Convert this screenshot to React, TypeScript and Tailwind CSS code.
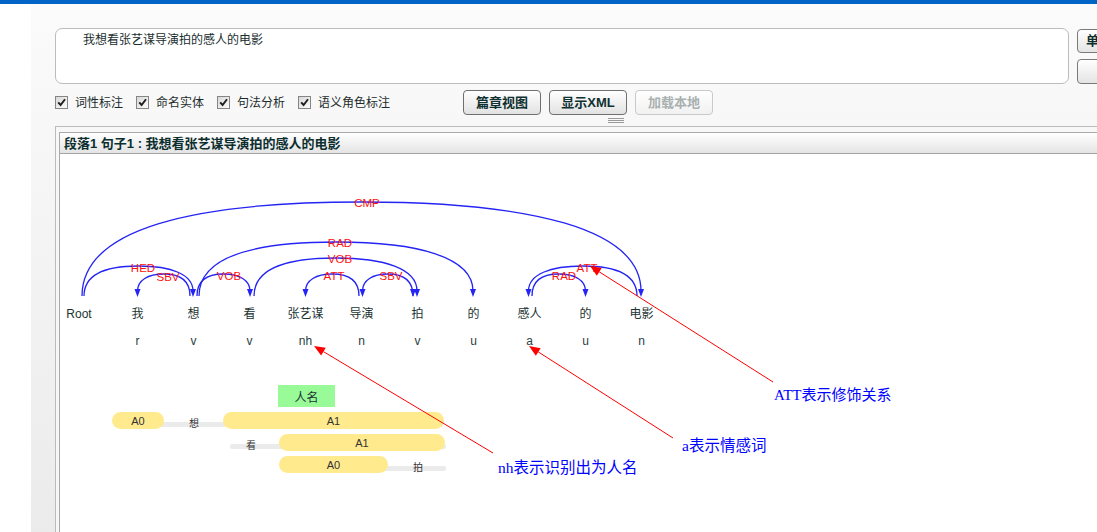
import React from "react";

const Y0 = 296;

type Arc = { a: number; b: number; top: number };

const arcs: Arc[] = [
  { a: 82, b: 641, top: 202 },
  { a: 84, b: 193, top: 266 },
  { a: 190, b: 137.5, top: 274 },
  { a: 197, b: 250, top: 274 },
  { a: 199, b: 473, top: 242 },
  { a: 254, b: 417, top: 258 },
  { a: 359, b: 305.5, top: 274 },
  { a: 413, b: 362.5, top: 274 },
  { a: 637, b: 528.5, top: 266 },
  { a: 532, b: 585.5, top: 274 },
];

const labels: [string, number, number][] = [
  ["CMP", 367, 203],
  ["HED", 143, 268],
  ["SBV", 168, 277],
  ["VOB", 229, 276],
  ["RAD", 340, 243],
  ["VOB", 340, 259],
  ["ATT", 334, 276],
  ["SBV", 391, 276],
  ["ATT", 587, 268],
  ["RAD", 564, 276],
];

const words: [string, string, number][] = [
  ["Root", "", 79],
  ["我", "r", 137.5],
  ["想", "v", 193.5],
  ["看", "v", 249.5],
  ["张艺谋", "nh", 305.5],
  ["导演", "n", 361.5],
  ["拍", "v", 417.5],
  ["的", "u", 473.5],
  ["感人", "a", 529.5],
  ["的", "u", 585.5],
  ["电影", "n", 641.5],
];

function arcPath({ a, b, top }: Arc) {
  const h = Y0 - top;
  const w = Math.abs(b - a);
  const s = b > a ? 1 : -1;
  const dx = w * 0.2 * s;
  const xm = (a + b) / 2;
  const cy = Y0 - h * 0.72;
  return `M${a},${Y0} C${a},${cy} ${a + dx},${top} ${xm},${top} S${b},${cy} ${b},${Y0 - 5}`;
}

function arrowHead(x: number) {
  return `${x - 3},${Y0 - 7} ${x + 3},${Y0 - 7} ${x},${Y0 + 1}`;
}

function redArrow(tx: number, ty: number, fx: number, fy: number) {
  const dx = tx - fx;
  const dy = ty - fy;
  const len = Math.sqrt(dx * dx + dy * dy);
  const ux = dx / len;
  const uy = dy / len;
  const L = 11;
  const W = 4.5;
  const bx = tx - ux * L;
  const by = ty - uy * L;
  const p1 = `${tx},${ty}`;
  const p2 = `${bx - uy * W},${by + ux * W}`;
  const p3 = `${bx + uy * W},${by - ux * W}`;
  return { line: { x1: fx, y1: fy, x2: bx, y2: by }, poly: `${p1} ${p2} ${p3}` };
}

const reds = [
  redArrow(590, 266, 773, 382),
  redArrow(529, 346, 673, 438),
  redArrow(314, 346, 493, 453),
];

function Check() {
  return (
    <span className="w-[13px] h-[13px] shrink-0 border border-[#858585] bg-gradient-to-br from-[#d8d8d8] to-[#fdfdfd] flex items-center justify-center">
      <svg width="9" height="9" viewBox="0 0 9 9">
        <path d="M1.2 4.3 L3.6 7 L8 1.2" stroke="#1e1e1e" strokeWidth="1.9" fill="none" />
      </svg>
    </span>
  );
}

function Btn({ children, disabled }: { children: React.ReactNode; disabled?: boolean }) {
  return (
    <div
      className={
        disabled
          ? "w-[78px] h-[25px] rounded-[4px] border border-[#c9c9c9] bg-gradient-to-b from-white to-[#f1f1f1] text-[13px] font-bold text-[#a8b0b0] flex items-center justify-center"
          : "w-[78px] h-[25px] rounded-[4px] border border-[#6f6f6f] bg-gradient-to-b from-white to-[#e2e2e2] text-[13px] font-bold text-[#0f3030] flex items-center justify-center"
      }
    >
      {children}
    </div>
  );
}

export default function App() {
  return (
    <div className="w-[1097px] h-[532px] overflow-hidden bg-white flex flex-col font-['Liberation_Sans','Noto_Sans_CJK_SC',sans-serif] text-[#1a3333]">
      <div className="h-[4px] shrink-0 bg-[#0063c6]" />
      <div className="flex flex-1 min-h-0">
        <div className="w-[31px] shrink-0 bg-white" />
        <div className="flex-1 min-w-0 overflow-hidden bg-gradient-to-b from-[#fbfbfb] to-[#ebebeb] pl-[24px] pt-[24px] flex flex-col">
          <div className="flex items-start gap-[8px] shrink-0">
            <div className="w-[1014px] h-[56px] shrink-0 border border-[#bcbcbc] rounded-[7px] bg-white pl-[27px] pt-[3px] text-[12px] leading-[16px] text-[#1a2e2e]">
              我想看张艺谋导演拍的感人的电影
            </div>
            <div className="flex flex-col gap-[6px] mt-[1px] shrink-0">
              <div className="w-[78px] h-[24px] rounded-[4px] border border-[#7a7a7a] bg-gradient-to-b from-white to-[#e4e4e4] text-[13px] font-bold text-[#0f3030] pl-[8px] flex items-center whitespace-nowrap overflow-hidden">
                单句分析
              </div>
              <div className="w-[78px] h-[25px] rounded-[4px] border border-[#7a7a7a] bg-gradient-to-b from-white to-[#e4e4e4]" />
            </div>
          </div>
          <div className="mt-[6px] h-[25px] flex items-center shrink-0 text-[12px] text-[#1c2c2c]">
            <div className="flex items-center gap-[7px]">
              <Check />
              <span>词性标注</span>
            </div>
            <div className="flex items-center gap-[7px] ml-[13px]">
              <Check />
              <span>命名实体</span>
            </div>
            <div className="flex items-center gap-[7px] ml-[13px]">
              <Check />
              <span>句法分析</span>
            </div>
            <div className="flex items-center gap-[7px] ml-[13px]">
              <Check />
              <span>语义角色标注</span>
            </div>
            <div className="flex gap-[8px] ml-[73px]">
              <Btn>篇章视图</Btn>
              <Btn>显示XML</Btn>
              <Btn disabled>加载本地</Btn>
            </div>
          </div>
          <div className="h-[11px] shrink-0 pt-[3px] pl-[553px]">
            <div className="w-[16px] flex flex-col gap-[1px]">
              <div className="h-px bg-[#9a9a9a]" />
              <div className="h-px bg-[#9a9a9a]" />
              <div className="h-px bg-[#9a9a9a]" />
            </div>
          </div>
          <div className="h-[430px] shrink-0 w-[1100px] border-t border-l border-[#bbbbbb] bg-[#f7f7f7] pt-[5px] pl-[3px] flex flex-col">
            <div className="flex-1 min-h-0 border border-[#aaaaaa] bg-white flex flex-col">
              <div className="h-[21px] shrink-0 border-b border-[#a3a3a3] bg-gradient-to-b from-white to-[#e4e4e4] pl-[4px] flex items-center text-[13px] font-bold text-[#0c2e2e] leading-none">
                段落1 句子1 : 我想看张艺谋导演拍的感人的电影
              </div>
              <div className="flex-1 min-h-0 relative overflow-hidden">
                <svg
                  className="absolute left-0 top-0"
                  width="1040"
                  height="380"
                  viewBox="60 154 1040 380"
                >
                  {arcs.map((arc, i) => (
                    <g key={i}>
                      <path d={arcPath(arc)} stroke="#2424f4" strokeWidth="1.3" fill="none" />
                      <polygon points={arrowHead(arc.b)} fill="#2424f4" />
                    </g>
                  ))}
                  <polygon points={arrowHead(413)} fill="#2424f4" />
                  {labels.map(([t, x, y], i) => (
                    <text
                      key={i}
                      x={x}
                      y={y}
                      textAnchor="middle"
                      dominantBaseline="central"
                      fontSize="11.5"
                      fill="#ff1010"
                      fontFamily="Liberation Sans, sans-serif"
                    >
                      {t}
                    </text>
                  ))}
                  {words.map(([w, p, x], i) => (
                    <g key={i}>
                      <text
                        x={x}
                        y={314}
                        textAnchor="middle"
                        dominantBaseline="central"
                        fontSize="12"
                        fill="#1c3333"
                        fontFamily="Liberation Sans, Noto Sans CJK SC, sans-serif"
                      >
                        {w}
                      </text>
                      {p && (
                        <text
                          x={x}
                          y={341}
                          textAnchor="middle"
                          dominantBaseline="central"
                          fontSize="12"
                          fill="#2a4040"
                          fontFamily="Liberation Sans, sans-serif"
                        >
                          {p}
                        </text>
                      )}
                    </g>
                  ))}

                  {/* semantic roles */}
                  <rect x="278" y="385" width="57" height="22" fill="#98fb98" />
                  <text x="306.5" y="396" textAnchor="middle" dominantBaseline="central" fontSize="12" fill="#1c3333" fontFamily="Noto Sans CJK SC, sans-serif">
                    人名
                  </text>

                  <rect x="160" y="422" width="68" height="5" fill="#ebebeb" />
                  <rect x="112" y="412" width="52" height="17" rx="8.5" fill="#ffea8e" />
                  <text x="138" y="420.5" textAnchor="middle" dominantBaseline="central" fontSize="11" fill="#333" fontFamily="Liberation Sans, sans-serif">A0</text>
                  <text x="194" y="422" textAnchor="middle" dominantBaseline="central" fontSize="10" fill="#333" fontFamily="Noto Sans CJK SC, sans-serif">想</text>
                  <rect x="223" y="412" width="221" height="17" rx="8.5" fill="#ffea8e" />
                  <text x="333.5" y="420.5" textAnchor="middle" dominantBaseline="central" fontSize="11" fill="#333" fontFamily="Liberation Sans, sans-serif">A1</text>

                  <rect x="230" y="444" width="216" height="5" rx="2" fill="#ebebeb" />
                  <text x="251" y="444" textAnchor="middle" dominantBaseline="central" fontSize="10" fill="#333" fontFamily="Noto Sans CJK SC, sans-serif">看</text>
                  <rect x="279" y="434" width="166" height="17" rx="8.5" fill="#ffea8e" />
                  <text x="362" y="442.5" textAnchor="middle" dominantBaseline="central" fontSize="11" fill="#333" fontFamily="Liberation Sans, sans-serif">A1</text>

                  <rect x="380" y="466" width="66" height="5" rx="2" fill="#ebebeb" />
                  <rect x="279" y="456" width="109" height="17" rx="8.5" fill="#ffea8e" />
                  <text x="333.5" y="464.5" textAnchor="middle" dominantBaseline="central" fontSize="11" fill="#333" fontFamily="Liberation Sans, sans-serif">A0</text>
                  <text x="418" y="466" textAnchor="middle" dominantBaseline="central" fontSize="10" fill="#333" fontFamily="Noto Sans CJK SC, sans-serif">拍</text>

                  {/* annotations */}
                  {reds.map((r, i) => (
                    <g key={i}>
                      <line {...r.line} stroke="#ff0000" strokeWidth="1" />
                      <polygon points={r.poly} fill="#ff0000" />
                    </g>
                  ))}
                  <text x="774" y="395" dominantBaseline="central" fontSize="15" fill="#0000ff" fontFamily="Liberation Serif, Noto Sans CJK SC, serif">
                    ATT表示修饰关系
                  </text>
                  <text x="682" y="445" dominantBaseline="central" fontSize="15.5" fill="#0000ff" fontFamily="Liberation Serif, Noto Sans CJK SC, serif">
                    a表示情感词
                  </text>
                  <text x="498" y="467" dominantBaseline="central" fontSize="15.5" fill="#0000ff" fontFamily="Liberation Serif, Noto Sans CJK SC, serif">
                    nh表示识别出为人名
                  </text>
                </svg>
              </div>
            </div>
          </div>
        </div>
      </div>
    </div>
  );
}
